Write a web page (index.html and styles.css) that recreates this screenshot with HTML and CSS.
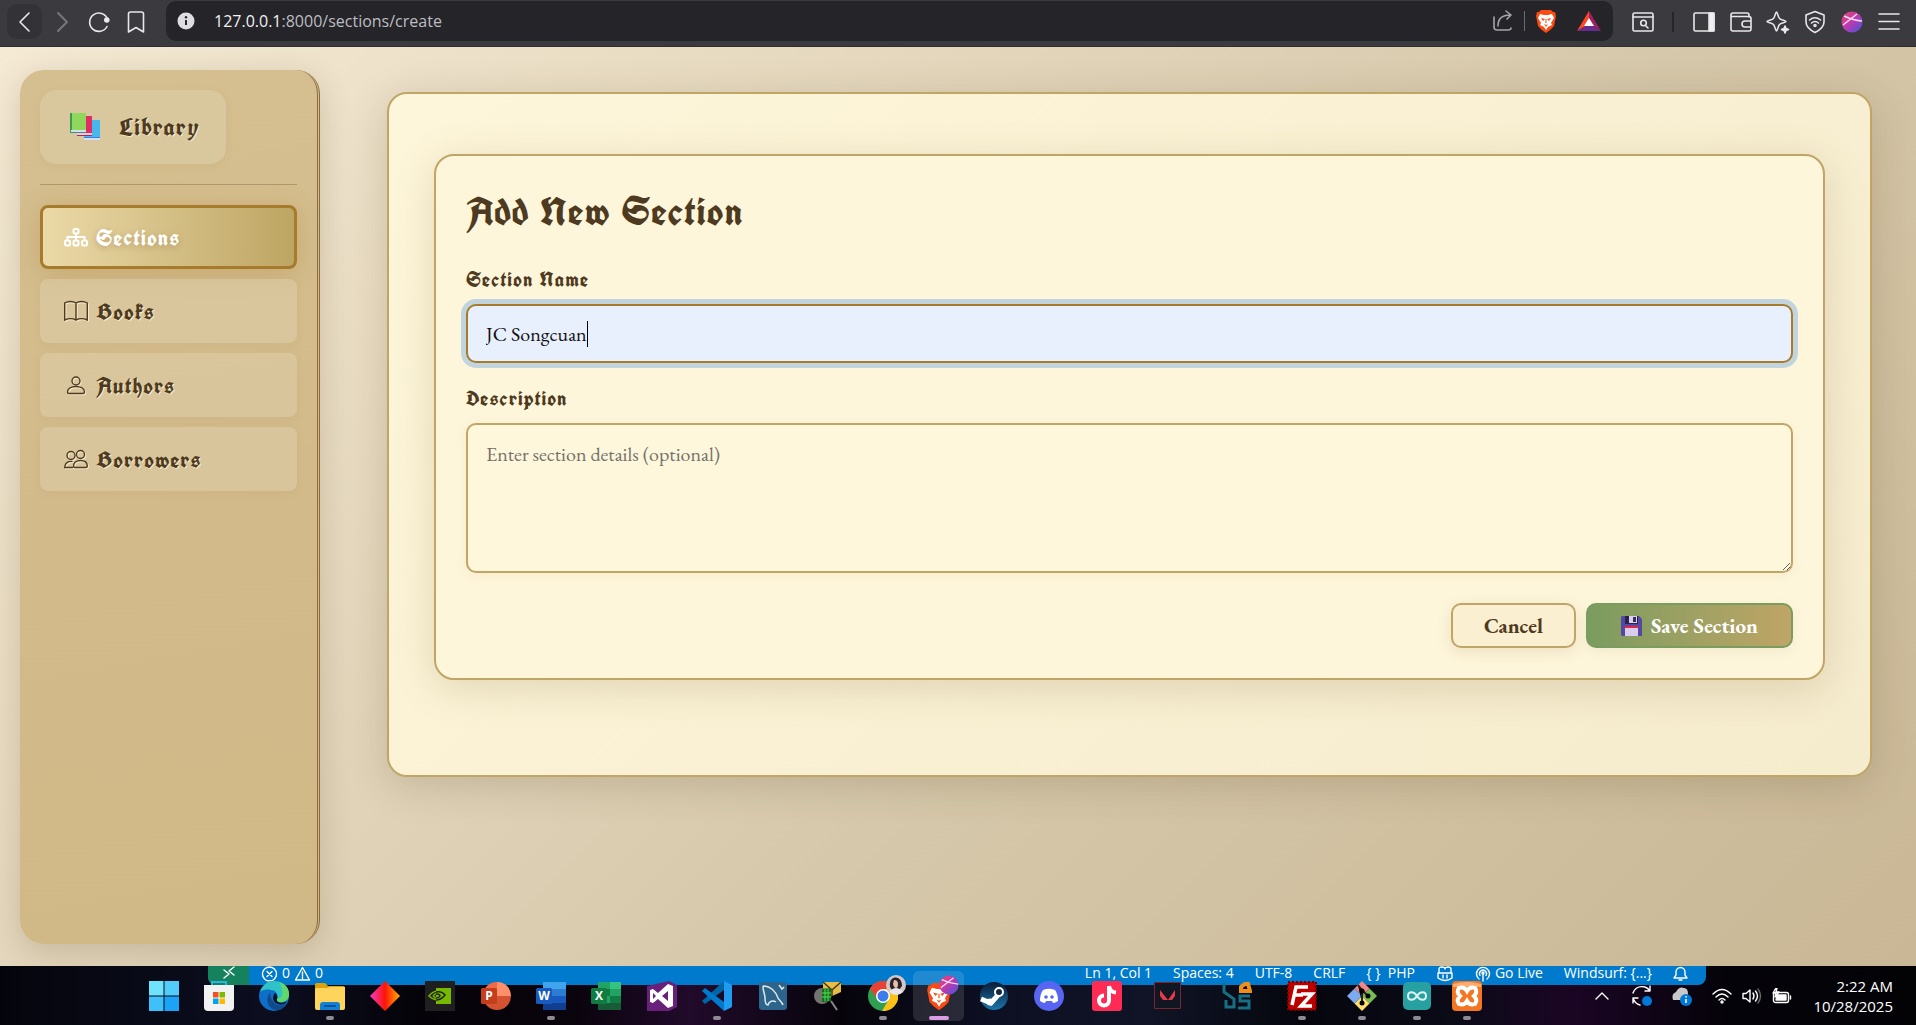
FILE: index.html
```html
<!DOCTYPE html>
<html lang="en">
<head>
<meta charset="utf-8">
<title>Add New Section</title>
<link rel="stylesheet" href="styles.css">
</head>
<body>
<header class="toolbar">
  <div class="tool-group">
    <button class="tool tool-raised" aria-label="Back"><svg width="24" height="24" viewBox="0 0 24 24" class="line bright"><path d="M16 3 7 12l9 9"/></svg></button>
    <button class="tool" aria-label="Forward"><svg width="24" height="24" viewBox="0 0 24 24" class="line dim"><path d="M8 3l9 9-9 9"/></svg></button>
    <button class="tool" aria-label="Reload"><svg width="24" height="24" viewBox="0 0 24 24" class="line bright"><path d="M20 16.500A9.200 9.200 0 1 1 20.500 9"/><circle cx="19.800" cy="10" r="2" fill="#f0f0f2"/></svg></button>
    <button class="tool" aria-label="Bookmark"><svg width="24" height="24" viewBox="0 0 24 24" class="line bright"><path d="M4.500 4q0-2 2-2h11q2 0 2 2v18L12 17.500 4.500 22z"/></svg></button>
  </div>
  <div class="address">
    <svg width="18" height="18" viewBox="0 0 18 18"><circle cx="9" cy="9" r="8.500" fill="#dedee2"/><path d="M9 8v5" stroke="#28282c" stroke-width="2"/><circle cx="9" cy="5.200" r="1.200" fill="#28282c"/></svg>
    <span class="url"><span class="host">127.0.0.1</span>:8000/sections/create</span>
    <button class="mini" aria-label="Share"><svg width="22" height="22" viewBox="0 0 22 22" class="line soft"><path d="M2 7v10q0 3 3 3h11q3 0 3-2M6 16C6 9 9 5 18 5M14 1l5 4-4 4"/></svg></button>
    <span class="split"></span>
    <button class="mini" aria-label="Brave Shields"><svg width="22" height="24" viewBox="0 0 22 24"><use href="#brave"/></svg></button>
    <button class="mini" aria-label="Rewards"><svg width="24" height="20" viewBox="0 0 24 20"><path d="M12 0 0 20l12-7z" fill="#ff4724"/><path d="M12 0l12 20-12-7z" fill="#9e1f63"/><path d="M0 20h24l-12-7z" fill="#662d91"/><path d="M12 7l5 8H7z" fill="#fff"/></svg></button>
  </div>
  <div class="tool-group tool-group-end">
    <button class="tool" aria-label="Search tabs"><svg width="24" height="24" viewBox="0 0 24 24" class="line bright"><rect x="2" y="3" width="20" height="18" rx="1.500"/><path d="M2 7h20M15 16l2 2"/><circle cx="12.500" cy="13" r="2.800"/></svg></button>
    <span class="split split-dark"></span>
    <button class="tool" aria-label="Sidebar"><svg width="24" height="24" viewBox="0 0 24 24" class="line bright"><rect x="2" y="3" width="20" height="18" rx="1.500"/><path d="M17 3h5v18h-5z" fill="#f0f0f2"/></svg></button>
    <button class="tool" aria-label="Wallet"><svg width="24" height="24" viewBox="0 0 24 24" class="line bright"><path d="M20 7V5q0-2-2-2H4Q2 3 2 5v14q0 2 2 2h16q2 0 2-2V8.500q0-2-2-2H2M22 11h-6q-3 0-3 3t3 3h6"/></svg></button>
    <button class="tool" aria-label="Assistant"><svg width="24" height="24" viewBox="0 0 24 24" class="line bright"><path d="M10.500 2c1 0 1.500 5 3 6.500S20 10.500 20 11.500s-5 1.500-6.500 3-2 6.500-3 6.500-1.500-5-3-6.500S1 12.500 1 11.500s5-1.500 6.500-3S9.500 2 10.500 2z"/><path d="M19 16l1 2.500 2.500 1-2.500 1-1 2.500-1-2.500-2.500-1 2.500-1z" fill="#f0f0f2"/></svg></button>
    <button class="tool" aria-label="VPN"><svg width="24" height="24" viewBox="0 0 24 24" class="line bright"><path d="M12 1.500 21 5v7c0 5-4 8-9 10.500C7 20 3 17 3 12V5z"/><path d="M6.500 10q5.500-4.500 11 0M8.500 13q3.500-3 7 0"/><circle cx="12" cy="15.500" r="1"/></svg></button>
    <button class="tool" aria-label="Profile"><svg width="22" height="22" viewBox="0 0 22 22"><use href="#orb"/></svg></button>
    <button class="tool" aria-label="Menu"><svg width="24" height="24" viewBox="0 0 24 24" class="line bright"><path d="M2 4h20M2 11.500h20M2 19h20"/></svg></button>
  </div>
</header>

<div class="shell">
  <aside class="sidebar">
    <a class="brand" href="#">
      <svg width="30" height="28" viewBox="0 0 30 28"><path d="M14 7h16v20H14z" fill="#45b8ee"/><path d="M14 25h16v2H14z" fill="#d7dcf7"/><path d="M14 24h16v1H14z" fill="#3f7fd6"/><path d="M7 3h15v19H7z" fill="#e02d63"/><path d="M7 20h15v2H7z" fill="#edc8df"/><path d="M7 22h15v1H7z" fill="#9d2c5f"/><path d="M0 0h16v18H0z" fill="#8fd85b"/><path d="M0 0h2v20H0z" fill="#3c9a55"/><path d="M1 17h15v2H1z" fill="#cfe4ea"/><path d="M1 19h15v1H1z" fill="#478a79"/></svg>
      <span>Library</span>
    </a>
    <nav class="nav">
      <a class="nav-link nav-active" href="#"><svg width="24" height="24" viewBox="0 0 24 24"><path d="M12 8.500v7M3.500 15.500V12h17v3.500"/><rect x="9.500" y="4" width="5" height="4.500" rx="1.500"/><rect x="1" y="15.500" width="5" height="5" rx="1.500"/><rect x="9.500" y="15.500" width="5" height="5" rx="1.500"/><rect x="18" y="15.500" width="5" height="5" rx="1.500"/></svg>Sections</a>
      <a class="nav-link" href="#"><svg width="24" height="24" viewBox="0 0 24 24"><path d="M12 4C9 2 4 2 .700 4v17C4 19.500 9 19.500 12 21c3-1.500 8-1.500 11.300 0V4C20 2 15 2 12 4zv17"/></svg>Books</a>
      <a class="nav-link" href="#"><svg width="24" height="24" viewBox="0 0 24 24"><circle cx="12" cy="8" r="4"/><path d="M3.500 19c0-3 3-5.500 8.500-5.500s8.500 2.500 8.500 5.500q0 1.500-1.500 1.500H5q-1.500 0-1.500-1.500z"/></svg>Authors</a>
      <a class="nav-link" href="#"><svg width="24" height="24" viewBox="0 0 24 24"><circle cx="16.500" cy="7.500" r="4"/><circle cx="7" cy="8.500" r="4"/><path d="M9.500 19c0-3 2.500-5.500 7-5.500s6.800 2.500 6.800 5.500q0 1.500-1.500 1.500H11q-1.500 0-1.500-1.500zM9 20.500H.700C.700 16 4 14 8.500 14.500"/></svg>Borrowers</a>
    </nav>
  </aside>

  <main class="panel">
    <form class="card">
      <h1 class="title">Add New Section</h1>
      <label class="label" for="name">Section Name</label>
      <div class="field-wrap">
        <input class="field field-focus" id="name" type="text" value="JC Songcuan">
        <span class="caret"></span>
      </div>
      <label class="label" for="description">Description</label>
      <textarea class="field field-area" id="description" placeholder="Enter section details (optional)"></textarea>
      <div class="actions">
        <button class="btn btn-cancel" type="button">Cancel</button>
        <button class="btn btn-save" type="submit"><svg width="21" height="20" viewBox="0 0 21 20"><path d="M1 0h17l3 3v17H1L0 19V1z" fill="#5548a2"/><path d="M4 0h13v8H4z" fill="#2d2150"/><path d="M8 0h8v7H8z" fill="#d9d0ec"/><path d="M12 1h3v5h-3z" fill="#3c2a63"/><path d="M4 10h13v10H4z" fill="#d9cdeb"/><path d="M4 10h13v2H4z" fill="#e32645"/></svg>Save Section</button>
      </div>
    </form>
  </main>
</div>

<footer class="taskbar">
  <div class="status">
    <span class="remote"><svg width="14" height="14" viewBox="0 0 14 14" class="line white"><path d="M2 4l5 4-5 4M12 1 7 5l5 4"/></svg></span>
    <span class="problems">
      <svg width="17" height="16" viewBox="0 0 17 16" class="line white"><circle cx="8.500" cy="8" r="7"/><path d="M6 5.500l5 5M11 5.500l-5 5"/></svg>0
      <svg width="17" height="16" viewBox="0 0 17 16" class="line white"><path d="M8.500 1.500 15.500 14h-14zM8.500 6v4M8.500 11v1.500"/></svg>0
    </span>
    <span class="status-end">
      <span>Ln 1, Col 1</span><span>Spaces: 4</span><span>UTF-8</span><span>CRLF</span><span>{ }&nbsp; PHP</span>
      <svg width="18" height="16" viewBox="0 0 18 16" class="line white"><path d="M3 7V3q0-2 3-2t3 2q0-2 3-2t3 2v4M2 7h14v5q-7 5-14 0z"/><path d="M7 9v3M11 9v3"/></svg>
      <span class="live"><svg width="16" height="16" viewBox="0 0 16 16" class="line white"><path d="M4 13a6.500 6.500 0 1 1 8 0M5 9.500a3.500 3.500 0 1 1 6 0M8 8v7"/><circle cx="8" cy="7" r="1"/></svg>Go Live</span>
      <span>Windsurf: {...}</span>
      <svg width="15" height="16" viewBox="0 0 15 16" class="line white"><path d="M1 12h13l-2-3V6a4.500 4.500 0 0 0-9 0v3zM6 14h3"/></svg>
    </span>
  </div>

  <div class="apps">
    <button class="app" aria-label="Start"><svg width="30" height="30" viewBox="0 0 30 30"><path d="M0 0h14.500v14.500H0z" fill="#6fe3fc"/><path d="M15.500 0H30v14.500H15.500z" fill="#52cdfb"/><path d="M0 15.500h14.500V30H0z" fill="#3fc0fa"/><path d="M15.500 15.500H30V30H15.500z" fill="#1ba3f8"/></svg></button>
    <button class="app" aria-label="Store"><svg width="30" height="30" viewBox="0 0 30 30"><path d="M8 6V1h14v5" fill="none" stroke="#25b5e8" stroke-width="2"/><path d="M0 4h30v22q0 4-4 4H4q-4 0-4-4z" fill="#f2f2f3"/><path d="M9 11h5.500v5.500H9z" fill="#f25022"/><path d="M15.500 11H21v5.500h-5.500z" fill="#7fba00"/><path d="M9 17.500h5.500V23H9z" fill="#00a4ef"/><path d="M15.500 17.500H21V23h-5.500z" fill="#ffb900"/></svg></button>
    <button class="app" aria-label="Edge"><svg width="30" height="30" viewBox="0 0 30 30"><circle cx="15" cy="15" r="15" fill="#0e6fc8"/><path d="M1 11C4 3 9 0 15 0c9 0 15 6 15 13 0 6-4 8-8 8-3 0-5-1-4-3 2-4-1-9-6-9-5-1-9 0-11 2z" fill="#2fc2c6"/><path d="M20 1c7 2 10 7 10 12 0 6-4 8-8 8-3 0-5-1-4-3 7 0 7-9 2-17z" fill="#62d86a"/><path d="M11 12c-6 7-1 17 7 17 4 0 7-2 9-6-7 4-15 0-16-11z" fill="#114a8b"/><path d="M18 18c-1 3 4 6 10 2l-1 2c-4 3-11 2-13-4 0-3 1-5 2-6 2 1 3 4 2 6z" fill="#07152a"/></svg></button>
    <button class="app app-open" aria-label="File Explorer"><svg width="30" height="28" viewBox="0 0 30 28"><path d="M0 8V3q0-2 2-2h8l3 3h15q2 0 2 2v6H0z" fill="#e0a009"/><path d="M0 8q0-2 2-2h10l3-1h15v21q0 2-2 2H2q-2 0-2-2z" fill="#ffd45c"/><path d="M5 28v-5q0-3 3-3h14q3 0 3 3v5z" fill="#1480d4"/><path d="M9 24h12" stroke="#075298" stroke-width="2"/></svg></button>
    <button class="app" aria-label="Launcher"><svg width="30" height="30" viewBox="0 0 30 30"><defs><linearGradient id="dia"><stop stop-color="#f43ac8"/><stop offset=".5" stop-color="#ff1408"/><stop offset="1" stop-color="#ffb000"/></linearGradient></defs><path d="M15 0l15 15-15 15L0 15z" fill="url(#dia)"/></svg></button>
    <button class="app" aria-label="NVIDIA"><svg width="30" height="30" viewBox="0 0 30 30"><path d="M0 0h30v30H0z" fill="#1e1f1e"/><path d="M11 7h15v16H11z" fill="#76b900"/><path d="M4 15q7-9 16-1-7 9-16 1zM8 15q4-5 8 0-4 4-8 0M15 9q6 1 9 6-4 5-9 6" fill="none" stroke="#76b900" stroke-width="1.500"/><path d="M11 11q6-1 9 3-4 5-9 5M11 13q4 0 4 2-1 2-4 2" fill="none" stroke="#1b240c" stroke-width="1.500"/></svg></button>
    <button class="app" aria-label="PowerPoint"><svg width="30" height="28" viewBox="0 0 30 28"><circle cx="16" cy="14" r="14" fill="#d35230"/><path d="M16 0a14 14 0 0 1 14 14H16z" fill="#ff8f6b"/><path d="M16 0v14H2A14 14 0 0 1 16 0z" fill="#ed6c47"/><rect y="6" width="16" height="16" rx="1.500" fill="#c43e1c"/><text x="8" y="18" class="letter">P</text></svg></button>
    <button class="app app-open" aria-label="Word"><svg width="30" height="28" viewBox="0 0 30 28"><path d="M7 0h23v7H7z" fill="#41a5ee"/><path d="M7 7h23v7H7z" fill="#2b7cd3"/><path d="M7 14h23v7H7z" fill="#185abd"/><path d="M7 21h23v7H7z" fill="#103f91"/><rect y="6" width="16" height="16" rx="1.500" fill="#185abd"/><text x="8" y="18" class="letter">W</text></svg></button>
    <button class="app" aria-label="Excel"><svg width="30" height="28" viewBox="0 0 30 28"><path d="M7 0h12v7H7zM7 14h12v14H7z" fill="#21a366"/><path d="M19 0h11v7H19z" fill="#33c481"/><path d="M7 7h12v7H7z" fill="#107c41"/><path d="M19 7h11v7H19z" fill="#21a366"/><path d="M19 14h11v7H19z" fill="#107c41"/><path d="M7 21h23v7H7z" fill="#185c37"/><rect y="6" width="16" height="16" rx="1.500" fill="#107c41"/><text x="8" y="18" class="letter">X</text></svg></button>
    <button class="app" aria-label="Visual Studio"><svg width="30" height="30" viewBox="0 0 30 30"><path d="M0 5 22 0l8 4v22l-8 4H0z" fill="#68217a"/><path d="M3 9l3-1 5 4 10-9 5 2v20l-5 2-10-9-5 4-3-1zM6 12v6l3-3zM21 10l-6 5 6 5z" fill="#fff" fill-rule="evenodd"/></svg></button>
    <button class="app app-open" aria-label="VS Code"><svg width="30" height="30" viewBox="0 0 30 30"><path d="M22 0 0 20l3 3L22 9z" fill="#0065a9"/><path d="M3 7 0 10l22 20v-9z" fill="#007acc"/><path d="M22 0l8 4v22l-8 4z" fill="#1f9cf0"/></svg></button>
    <button class="app" aria-label="MySQL Workbench"><svg width="28" height="28" viewBox="0 0 28 28"><rect width="28" height="28" rx="3" fill="#2d6489"/><path d="M4 4c8 0 13 6 15 12 1 2 4 4 5 7M4 4c0 6 2 8 2 12s1 7 3 7c1-4 5-5 8-3M20 3l3 4 2-2" fill="none" stroke="#dce8ee" stroke-width="1.500"/></svg></button>
    <button class="app" aria-label="Mail server"><svg width="30" height="30" viewBox="0 0 30 30"><path d="M10 1h18v10l-11 5-7-7z" fill="#e6bd48"/><path d="M10 1l9 8 9-8M19 9v6" fill="none" stroke="#4a3812" stroke-width="1.500"/><circle cx="9" cy="15" r="8" fill="#73736d"/><path d="M9 8l9-1v13l-9 1z" fill="#176b21"/><path d="M12 8v12M15 8v12M9 12h9M9 16h9" stroke="#4de34e"/><path d="M18 20l6 9" stroke="#888" stroke-width="2"/></svg></button>
    <button class="app app-open" aria-label="Chrome"><svg width="30" height="30" viewBox="0 0 30 30"><circle cx="15" cy="15" r="15" fill="#2ea04f"/><path d="M2 7.500a15 15 0 0 1 26 0l2 3H15L9 18z" fill="#e64335"/><path d="M15 8h13.500A15 15 0 0 1 14 30l7-12z" fill="#fbc116"/><circle cx="15" cy="15" r="7" fill="#fff"/><circle cx="15" cy="15" r="5.500" fill="#3b7ded"/></svg><svg class="badge" width="20" height="20" viewBox="0 0 20 20"><circle cx="10" cy="10" r="10" fill="#d4c7c7"/><path d="M4 12C2 0 16-1 16 11l-3 4H6z" fill="#292127"/><path d="M8 5q4 0 4 4t-2 4-3-4z" fill="#e8bca8"/><path d="M3 17q7-8 14 0-7 6-14 0z" fill="#e9e4ea"/></svg></button>
    <button class="app app-current" aria-label="Brave"><svg width="26" height="30" viewBox="0 0 22 24"><use href="#brave"/></svg><svg class="badge" width="20" height="20" viewBox="0 0 22 22"><use href="#orb"/></svg></button>
    <button class="app" aria-label="Steam"><svg width="28" height="28" viewBox="0 0 28 28"><defs><linearGradient id="stm" x2="0" y2="1"><stop stop-color="#0c1a35"/><stop offset="1" stop-color="#1a76ad"/></linearGradient></defs><circle cx="14" cy="14" r="14" fill="url(#stm)"/><path d="M1 17l10 4 8-9" stroke="#fff" stroke-width="5" fill="none"/><circle cx="19" cy="10" r="4" fill="#122746" stroke="#fff" stroke-width="2"/><circle cx="10" cy="20" r="3.500" fill="#fff"/></svg></button>
    <button class="app" aria-label="Discord"><svg width="30" height="30" viewBox="0 0 30 30"><circle cx="15" cy="15" r="15" fill="#5865f2"/><path d="M9 9q6-2.500 12 0 3 4 3 11-3 2-5 2l-1-2h-6l-1 2q-2 0-5-2 0-7 3-11z" fill="#fff"/><circle cx="12" cy="16" r="1.800" fill="#5865f2"/><circle cx="18" cy="16" r="1.800" fill="#5865f2"/></svg></button>
  </div>
  <div class="apps apps-pinned">
    <button class="app slot-60" aria-label="TikTok"><svg width="30" height="30" viewBox="0 0 30 30"><rect width="30" height="30" rx="3" fill="#fe2c55"/><path d="M17 5v14.500a5 5 0 1 1-5-5M17 5q1 6 7 6.500" stroke="#fff" stroke-width="4" fill="none"/></svg></button>
    <button class="app slot-60" aria-label="Valorant"><svg width="27" height="27" viewBox="0 0 27 27"><path d="M.500.500h26v26H.500z" fill="#101722" stroke="#79242f"/><path d="M6 8l8 10h-5l-3-4zM21 8v6l-3 4h-4z" fill="#e8394b"/></svg></button>
    <button class="app slot-80" aria-label="VirtualBreadboard"><svg width="30" height="28" viewBox="0 0 30 28"><path d="M2 1v9l10 7v8H4v-7M28 14H18v5h9v7H16" stroke="#176f83" stroke-width="3" fill="none"/><path d="M19 9V5l4-3h3l2 7z" fill="none" stroke="#ef8e19" stroke-width="4"/></svg></button>
    <button class="app app-open slot-50" aria-label="FileZilla"><svg width="30" height="30" viewBox="0 0 30 30"><path d="M1 1h28v28H1z" fill="#b00"/><path d="M1 1h28v28H1z" fill="none" stroke="#790000" stroke-width="2" stroke-dasharray="2 2"/><path d="M5 24 9 6h12M8 14h8M14 13h11L14 25h11" fill="none" stroke="#fff" stroke-width="3.500"/></svg></button>
    <button class="app app-open slot-70" aria-label="Git Bash"><svg width="30" height="30" viewBox="0 0 30 30"><path d="M15 0l7.500 7.500L15 15 7.500 7.500z" fill="#f58484"/><path d="M22.500 7.500 30 15l-7.500 7.500L15 15z" fill="#76bd54"/><path d="M15 15l7.500 7.500L15 30l-7.500-7.500z" fill="#ffe06a"/><path d="M7.500 7.500 15 15l-7.500 7.500L0 15z" fill="#7eabef"/><path d="M11 4l4 5v13M15 9l6 6" stroke="#202020" stroke-width="2"/><circle cx="15" cy="10" r="2.500"/><circle cx="15" cy="22" r="2.500"/><circle cx="21" cy="15" r="2.500"/></svg></button>
    <button class="app app-open slot-40" aria-label="Arduino"><svg width="28" height="28" viewBox="0 0 28 28"><rect width="28" height="28" rx="5" fill="#26a0a1"/><path d="M14 14c-3-5-9-5-9 0s6 5 9 0 9-5 9 0-6 5-9 0z" fill="none" stroke="#d9f1f0" stroke-width="2"/></svg></button>
    <button class="app app-open slot-60" aria-label="XAMPP"><svg width="30" height="30" viewBox="0 0 30 30"><rect width="30" height="30" rx="4" fill="#f37623"/><path d="M1 3q14-4 28 0v3H1z" fill="#ffac70"/><path d="M7 7q5-2 8 3 3-5 8-3 3 4-1 8 4 4 1 8-5 2-8-3-3 5-8 3-3-4 1-8-4-4-1-8z" fill="none" stroke="#fff" stroke-width="4"/></svg></button>
  </div>

  <div class="tray">
    <button class="tray-item" aria-label="Hidden icons"><svg width="16" height="16" viewBox="0 0 16 16" class="line white"><path d="M2 11l6-6 6 6"/></svg></button>
    <button class="tray-item" aria-label="Sync"><svg width="22" height="22" viewBox="0 0 22 22" class="line white"><path d="M2 8q3-8 12-6 3 1 5 4M19 1v5h-5M2 13q2 6 7 7M2 18v-5h5"/><circle cx="16" cy="16" r="5" fill="#0078d7" stroke="none"/></svg></button>
    <button class="tray-item" aria-label="Cloud"><svg width="22" height="20" viewBox="0 0 22 20"><path d="M2 14Q0 8 5 6q3-6 8-4 4 0 4 6v6z" fill="#c8c8c8"/><circle cx="15" cy="14" r="6" fill="#0078d7"/><path d="M15 13v4M15 10v1.500" stroke="#fff" stroke-width="1.500"/></svg></button>
    <button class="tray-item tray-tight" aria-label="Wi-Fi"><svg width="20" height="16" viewBox="0 0 20 16" class="line white"><path d="M1 6q9-9 18 0M4 9q6-6 12 0M7 12q3-3 6 0"/><circle cx="10" cy="14" r="1"/></svg></button>
    <button class="tray-item tray-tight" aria-label="Volume"><svg width="20" height="16" viewBox="0 0 20 16" class="line white"><path d="M1 5.500h3L8 2v12l-4-3.500H1zM11 5q2 3 0 6M13.500 3q4 5 0 10"/><path d="M16 1q5 7 0 14" opacity=".4"/></svg></button>
    <button class="tray-item tray-tight" aria-label="Battery"><svg width="20" height="16" viewBox="0 0 20 16" class="line white"><rect x="1.500" y="4.500" width="15" height="10" rx="2"/><path d="M5 7h9v5H4z" fill="#fff"/><path d="M18.500 8v3M4 0 1 5h3L3 9l4-5H4l1-4z"/></svg></button>
    <div class="clock"><span>2:22 AM</span><span>10/28/2025</span></div>
  </div>
</footer>

<svg class="symbols" width="0" height="0" aria-hidden="true">
  <defs>
    <linearGradient id="orb-fill" x1="0" y1="0" x2="1" y2="1"><stop stop-color="#f0436f"/><stop offset=".5" stop-color="#b83bb0"/><stop offset="1" stop-color="#3f55e0"/></linearGradient>
    <g id="orb"><circle cx="11" cy="11" r="10.500" fill="url(#orb-fill)"/><path d="M3 5q8 4 18 5M2 14 16 3" stroke="#ffd9f4" stroke-width="1.500" fill="none"/></g>
    <g id="brave"><path d="M6 1h10l2 2h2l1 4-2 10q-3 4-8 7-5-3-8-7L1 7l1-4h2z" fill="#fb4a12"/><path d="M5 5l4 1h4l4-1 2 4-3 5 1 2-4 2-2 3-2-3-4-2 1-2-3-5z" fill="#fff"/><path d="M6 9l4 1-2 2zM16 9l-4 1 2 2zM9 15l2 1 2-1-2 3zM10.500 10h1v4h-1z" fill="#fb4a12"/></g>
  </defs>
</svg>
</body>
</html>
```
FILE: styles.css
```css
* {
  box-sizing: border-box;
}

:root {
  --ink: #4e3a20;
  --gold: #bfa566;
  --gold-dark: #a67b2b;
  --cream: #fef6db;
  --display: "UnifrakturCook", "Liberation Serif", serif;
  --text: "EB Garamond", "Liberation Serif", serif;
  --system: "Segoe UI", "Open Sans", sans-serif;
}

body {
  margin: 0;
  min-height: 100vh;
  display: flex;
  flex-direction: column;
  font-family: var(--text);
  color: var(--ink);
}

button {
  border: 0;
  padding: 0;
  background: none;
  font: inherit;
}

.line {
  fill: none;
  stroke-width: 2;
  stroke-linejoin: round;
  stroke-linecap: round;
}

.bright { stroke: #e8e8ea; stroke-width: 1.6; }
.soft { stroke: #a5a5a9; stroke-width: 1.6; }
.dim { stroke: #77777b; }
.white { stroke: #fff; stroke-width: 1.4; }

.symbols { position: absolute; }

/* browser toolbar */
.toolbar {
  display: flex;
  align-items: flex-start;
  height: 47px;
  padding: 1px 10px 0 7px;
  background: #3b3b3f;
  border-bottom: 1px solid #2d2d32;
  font-family: var(--system);
}

.tool-group {
  display: flex;
  align-items: center;
  gap: 2px;
  height: 41px;
  margin-right: 13px;
}

.tool-group-end {
  margin: 0 0 0 12px;
}

.tool {
  display: grid;
  place-items: center;
  width: 35px;
  height: 35px;
  border-radius: 10px;
}

.tool-raised { background: #333337; }

.address {
  flex: 1;
  display: flex;
  align-items: center;
  height: 40px;
  padding: 0 2px 0 11px;
  border-radius: 10px;
  background: #242429;
}

.url {
  flex: 1;
  margin-left: 19px;
  font-size: 16px;
  color: #bdbdc1;
}

.host { color: #f2f2f4; }

.mini {
  display: flex;
  margin: 0 10px;
}

.split {
  width: 1px;
  height: 20px;
  background: #6b6b70;
}

.split-dark {
  width: 2px;
  margin: 0 10px;
  background: #242429;
}

/* library page */
.shell {
  flex: 1;
  display: flex;
  align-items: stretch;
  gap: 67px;
  padding: 23px 44px 22px 20px;
  background: linear-gradient(135deg, #f5ead4 0%, #d5c7a9 60%, #c9b795 100%);
}

.sidebar {
  flex: 0 0 300px;
  padding: 20px;
  border-right: 3px double #8b6b3e;
  border-radius: 24px;
  background: linear-gradient(170deg, #d5bf90, #d3ba8a 50%, #d0b887);
  box-shadow: 0 8px 32px rgba(78, 58, 32, .2);
}

.brand {
  display: flex;
  align-items: center;
  gap: 19px;
  width: 186px;
  height: 74px;
  padding-left: 30px;
  border-radius: 16px;
  background: rgba(222, 208, 172, .5);
  box-shadow: 0 2px 8px rgba(139, 107, 62, .08);
  color: var(--ink);
  font: bold 25px/30px var(--display);
  letter-spacing: 1px;
  text-decoration: none;
  text-shadow: 1px 1px 0 #f6ebcd;
}

.nav {
  display: flex;
  flex-direction: column;
  gap: 10px;
  margin-top: 20px;
  padding-top: 20px;
  border-top: 1px solid #ae976d;
}

.nav-link {
  display: flex;
  align-items: center;
  gap: 8px;
  height: 64px;
  padding: 0 24px;
  border-radius: 8px;
  background: rgba(222, 208, 172, .5);
  box-shadow: 0 2px 8px rgba(139, 107, 62, .08);
  color: var(--ink);
  font: bold 23px/30px var(--display);
  letter-spacing: 1px;
  text-decoration: none;
  text-shadow: 1px 1px 0 #f6ebcd;
}

.nav-link svg {
  fill: none;
  stroke: currentColor;
  stroke-width: 1.4;
  filter: drop-shadow(1px 1px 0 #f6ebcd);
}

.nav-active {
  padding: 0 21px;
  border: 3px solid var(--gold-dark);
  background: linear-gradient(90deg, #ebd9a7, #bda563);
  box-shadow: 0 4px 24px rgba(166, 123, 43, .3);
  color: #fff;
  text-shadow: 0 2px 6px rgba(139, 107, 62, .4);
}

.nav-active svg {
  stroke-width: 2;
  filter: none;
}

.panel {
  flex: 1;
  align-self: flex-start;
  margin-top: 22px;
  padding: 60px 45px 95px;
  border: 2px solid var(--gold);
  border-radius: 20px;
  background: linear-gradient(135deg, #fef6da, #f5ebcd);
  box-shadow: 0 8px 40px rgba(78, 58, 32, .2);
}

.card {
  padding: 30px;
  border: 2px solid var(--gold);
  border-radius: 20px;
  background: var(--cream);
  box-shadow: 0 8px 40px rgba(120, 100, 50, .2);
}

.title {
  margin: 0 0 30px;
  font: bold 40px/50px var(--display);
  letter-spacing: 1px;
}

.label {
  display: block;
  margin-bottom: 12px;
  font: bold 21px/26px var(--display);
  letter-spacing: 1px;
}

.field-wrap {
  position: relative;
  margin-bottom: 22px;
}

.field {
  display: block;
  width: 100%;
  padding: 12px 18px;
  border: 2px solid var(--gold);
  border-radius: 10px;
  outline: 0;
  background: #fff7dc;
  box-shadow: 0 2px 12px rgba(191, 165, 102, .12);
  color: #111;
  font: 20px/34px var(--text);
}

.field-focus {
  height: 59px;
  border-color: var(--gold-dark);
  background: #e8effd;
  box-shadow: 0 0 0 5px #c2d5df;
}

.field-area {
  height: 150px;
}

.field::placeholder { color: #73716a; }

.caret {
  position: absolute;
  top: 17px;
  left: 121px;
  width: 1px;
  height: 26px;
  background: #000;
}

.actions {
  display: flex;
  justify-content: flex-end;
  gap: 10px;
  margin-top: 30px;
}

.btn {
  display: flex;
  align-items: center;
  gap: 9px;
  height: 45px;
  padding: 0 31px;
  border: 2px solid var(--gold);
  border-radius: 10px;
  font: bold 21px/28px var(--text);
}

.btn-cancel {
  background: #faf0d1;
  box-shadow: 0 4px 16px rgba(120, 100, 50, .14);
  color: var(--ink);
}

.btn-save {
  padding: 0 33px;
  border-color: #7b9c5f;
  background: linear-gradient(90deg, #7b9c5f, #bfa566);
  box-shadow: 0 4px 12px rgba(120, 100, 50, .08);
  color: #fff;
}

/* desktop taskbar */
.taskbar {
  position: relative;
  display: flex;
  align-items: center;
  height: 59px;
  padding: 0 23px 0 136px;
  background: linear-gradient(90deg, #04050c, #0c0e20 14%, #050309 22%, #0a040d 30%, #210a2a 36%, #06040b 44%, #0d1023 52%, #101426 60%, #05060d 68%, #0b0b18 76%, #1b0524 82%, #05030a 90%, #030306);
  color: #fff;
  font: 14px/20px var(--system);
}

.status {
  position: absolute;
  top: 0;
  left: 208px;
  right: 210px;
  display: flex;
  height: 19px;
  border-radius: 0 0 8px 8px;
  background: #007acc;
  line-height: 14px;
}

.remote {
  width: 41px;
  padding-left: 14px;
  border-radius: 0 0 0 8px;
  background: #16825d;
}

.problems,
.status-end,
.live {
  display: flex;
  gap: 4px;
  height: 15px;
}

.problems { padding-left: 12px; }

.status-end {
  gap: 21px;
  margin-left: auto;
  padding-right: 18px;
}

.apps {
  position: relative;
  display: grid;
  grid-template-columns: repeat(17, 1fr);
  flex: 0 0 941px;
}

.apps-pinned {
  display: flex;
  flex: none;
}

.app {
  position: relative;
  display: grid;
  place-items: center;
  height: 50px;
}

.slot-40 { width: 40px; }
.slot-50 { width: 50px; }
.slot-60 { width: 60px; }
.slot-70 { width: 70px; }
.slot-80 { width: 80px; }

.app-open::after,
.app-current::after {
  content: "";
  position: absolute;
  bottom: 1px;
  left: calc(50% - 4px);
  width: 8px;
  height: 4px;
  border-radius: 2px;
  background: #8d8b91;
}

.app-current {
  margin: 0 2px;
  border-radius: 6px;
  background: rgba(255, 255, 255, .12);
}

.app-current::after {
  left: calc(50% - 10px);
  width: 20px;
  background: #db9ce6;
}

.badge {
  position: absolute;
  top: 4px;
  right: 5px;
}

.letter {
  fill: #fff;
  font: bold 12px "Open Sans", sans-serif;
  text-anchor: middle;
}

.tray {
  display: flex;
  align-items: center;
  margin-left: auto;
}

.tray-item {
  display: grid;
  place-items: center;
  width: 40px;
  height: 40px;
}

.tray-tight { width: 30px; }

.tray-tight:nth-child(4) { margin-left: 5px; }

.clock {
  display: grid;
  justify-items: end;
  margin-left: 16px;
  font-size: 15px;
}
```
